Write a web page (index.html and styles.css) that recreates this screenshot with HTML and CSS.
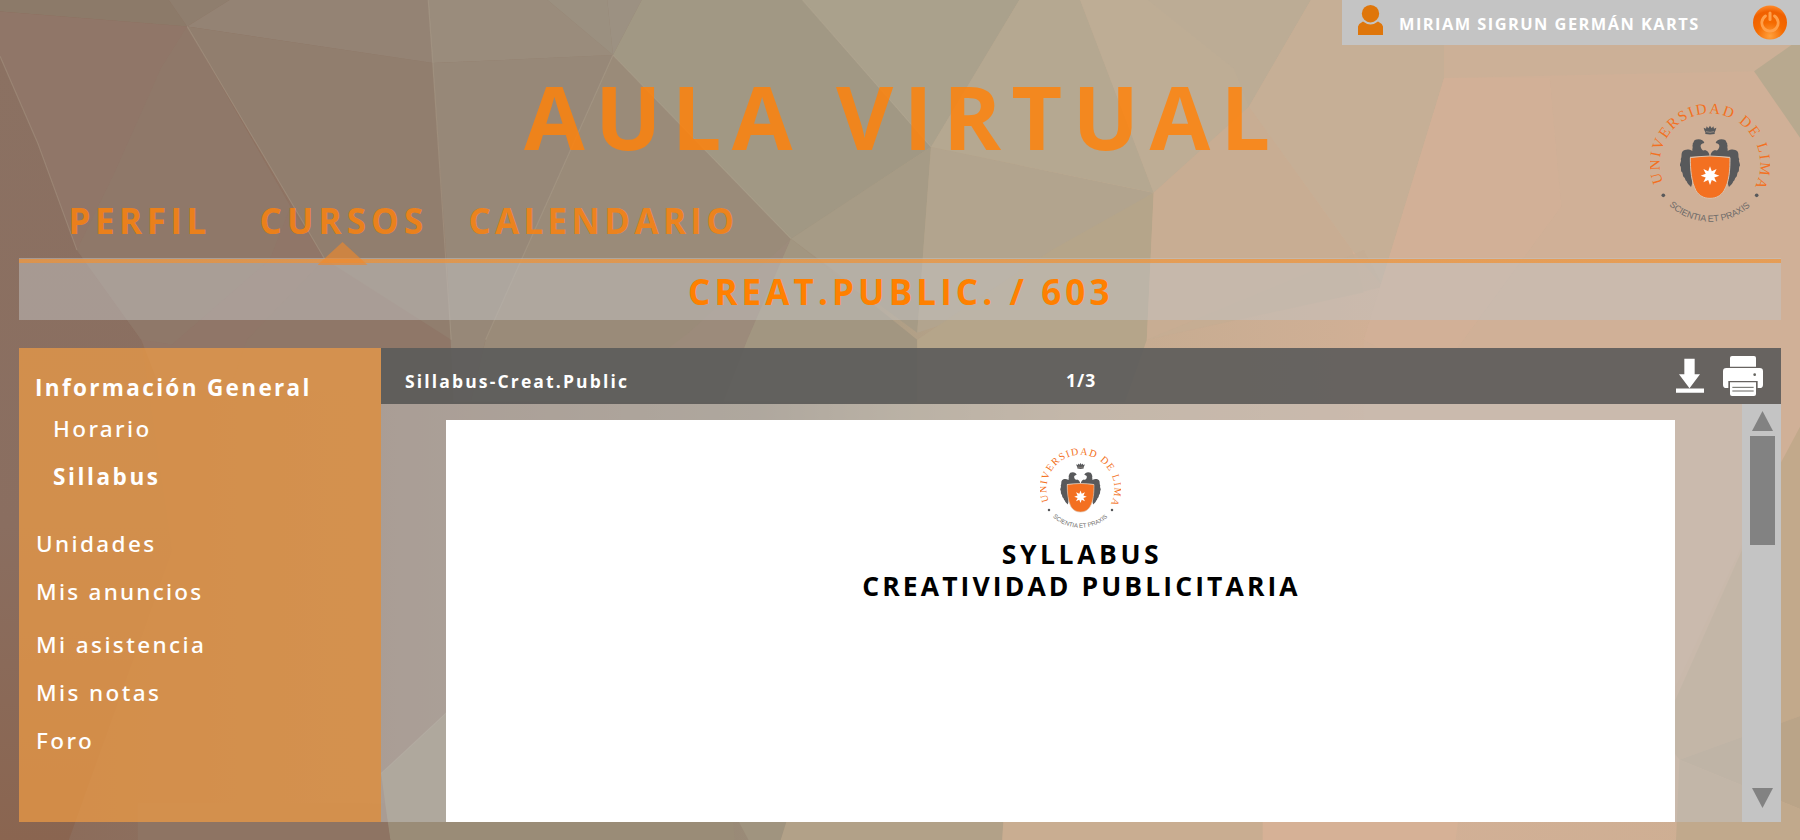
FILE: index.html
```
<!DOCTYPE html>
<html lang="es">
<head>
<meta charset="utf-8">
<title>Aula Virtual</title>
<link rel="stylesheet" href="styles.css">
</head>
<body>
<svg class="backdrop" viewBox="0 0 1568 732" preserveAspectRatio="none" aria-hidden="true">
  <defs>
    <linearGradient id="base" x1="0" x2="1" y1="0" y2="0">
      <stop offset="0" stop-color="#8b6a58"/>
      <stop offset=".2" stop-color="#8f7666"/>
      <stop offset=".42" stop-color="#9a8b78"/>
      <stop offset=".5" stop-color="#b09f86"/>
      <stop offset=".6" stop-color="#c4ab90"/>
      <stop offset=".78" stop-color="#d2b096"/>
      <stop offset="1" stop-color="#cdae92"/>
    </linearGradient>
    <linearGradient id="left" x1="0" x2="0" y1="0" y2="1">
      <stop offset="0" stop-color="#8b7162"/>
      <stop offset=".6" stop-color="#8a6e60"/>
      <stop offset="1" stop-color="#8a6550"/>
    </linearGradient>
  </defs>
  <rect width="1568" height="732" fill="url(#base)"/>
  <path fill="url(#left)" d="M0 49 33 125 67 218 123 296 150 480 60 732H0Z"/>
  <path fill="#8c7a69" d="M0 0H147L163 23 0 10Z"/>
  <path fill="#907668" d="M0 10 163 23 253 180 283 226 347 296 330 340H140L123 296 67 218 33 125 0 49Z"/>
  <path fill="#8f796a" d="M163 23 253 180 235 226 150 300 123 296 67 218 100 150 140 60Z" opacity=".7"/>
  <path fill="#8f7e6e" d="M147 0H200L163 23Z"/>
  <path fill="#948374" d="M200 0H373L377 55 163 23Z"/>
  <path fill="#917e6e" d="M163 23 377 55 393 296H347L283 226Z"/>
  <path fill="#8f7768" d="M283 226 393 296 400 340H200L215 296Z"/>
  <path fill="#9a8c7c" d="M373 0H477L534 48 377 55Z"/>
  <path fill="#9b9080" d="M477 0H529L534 48Z"/>
  <path fill="#9c9182" d="M529 0H559L534 48Z"/>
  <path fill="#978878" d="M377 55 534 48 423 296 410 350 395 350 390 240Z"/>
  <path fill="#9a8b79" d="M534 48 689 208 651 296 630 350H410L423 296Z"/>
  <path fill="#9c8b7b" d="M689 208 651 296 630 350H520L600 290Z"/>
  <path fill="#a19884" d="M559 0H699L811 128 689 208 534 48Z"/>
  <path fill="#aaa18c" d="M699 0H888L811 128Z"/>
  <path fill="#a69b86" d="M811 128 689 208 799 290Z"/>
  <path fill="#a29681" d="M689 208 799 296V350H630L651 296Z"/>
  <path fill="#b2a48e" d="M811 128 1005 168 830 280 799 290Z"/>
  <path fill="#b5a891" d="M888 0H941L1005 168 811 128Z"/>
  <path fill="#bcac95" d="M941 0H1142L1088 93 1005 168Z"/>
  <path fill="#c0ae96" d="M941 0H1000L1075 60 1088 93 1005 168Z" opacity=".5"/>
  <path fill="#b5a58a" d="M1005 168 999 296 980 350H799V296L916 218Z"/>
  <path fill="#c8ad93" d="M1005 168 1088 93 1178 218 1188 255 999 296Z"/>
  <path fill="#c6af96" d="M1142 0H1258V68L1205 250 1178 218 1088 93Z"/>
  <path fill="#ccb097" d="M1258 0H1568V70H1258Z"/>
  <path fill="#c5ad93" d="M1188 218 1205 250 999 296Z" opacity=".7"/>
  <path fill="#d0b097" d="M1258 68 1528 62 1568 110V372L1551 404 1440 640 1190 640 1188 296Z"/>
  <path fill="#d4b097" d="M1258 68 1188 296 1250 330 1360 180 1350 68Z" opacity=".55"/>
  <path fill="#b8a98f" d="M1528 62 1568 34V120Z"/>
  <path fill="#c2a98b" d="M1568 372 1551 404 1446 640 1463 662 1568 624Z"/>
  <path fill="#baa488" d="M1463 662 1568 624V705Z"/>
  <path fill="#c1a98c" d="M1463 662 1568 705V732H1460Z"/>
  <path fill="#9a8c77" d="M389 621 332 674 340 732H640L630 600Z"/>
  <path fill="#8e7463" d="M120 700H335L340 732H120Z"/>
  <path fill="#a0947f" d="M635 700H690L680 732H652Z"/>
  <path fill="#b2a188" d="M690 700H875L873 732H680Z"/>
  <path fill="#c9ad91" d="M875 700H1100V732H873Z"/>
  <path fill="#d6b196" d="M1100 700H1272L1268 732H1100Z"/>
  <g fill="none" stroke="#b9ae9a" stroke-opacity=".3">
    <path d="M534 48 689 208M699 0 811 128M163 23 283 226M0 49 33 125 67 218M389 621 332 674M373 0 377 55 393 296M534 48 423 296"/>
  </g>
</svg>

<svg class="defs" aria-hidden="true">
  <defs>
    <path id="arc-top" d="M99.500 277A151 151 0 1 1 380.500 277"/>
    <path id="arc-bottom" d="M117 346A179 179 0 0 0 363 346"/>
    <path id="eagle" d="M239 198C237 187 232 182 225 180C219 184 213 177 212 170C211 164 215 161 223 159C221 152 214 148 206 148C196 148 191 152 191 157C186 160 190 164 187 168C190 171 186 176 187 183C176 176 164 178 158 184C152 192 157 200 152 208C156 212 149 220 150 227C155 230 151 240 155 246C160 248 157 258 162 262C166 264 165 272 170 274C172 282 179 286 183 291C187 284 187 276 186 268L180 200Z"/>
    <symbol id="crest" viewBox="60 36 360 360">
      <text class="motto-top"><textPath href="#arc-top" textLength="602" lengthAdjust="spacing">UNIVERSIDAD DE LIMA</textPath></text>
      <text class="motto-bottom"><textPath href="#arc-bottom" textLength="268" lengthAdjust="spacing">SCIENTIA ET PRAXIS</textPath></text>
      <g fill="#58595b">
        <circle cx="100" cy="316" r="5.500"/><circle cx="380" cy="316" r="5.500"/>
        <path d="M226 126C223 121 222 117 221 113L228 116 230 109 235 115 240 107 245 115 250 109 252 116 259 113C258 117 257 121 254 126V132C245 134 235 134 226 132Z"/>
        <use href="#eagle"/><use href="#eagle" transform="matrix(-1 0 0 1 480 0)"/>
      </g>
      <path d="M228 125Q240 129 252 125" fill="none" stroke="#b9a594" stroke-width="2"/>
      <path d="M181 203Q210 199 240 198Q270 199 300 203C300 240 298 275 282 302C272 318 258 325 240 325C222 325 208 318 198 302C184 275 181 240 181 203Z" fill="#f37021" stroke="#d9c3b0" stroke-width="3"/>
      <path d="M240 229 245.400 244 259.800 237.200 252.900 251.600 268 257 252.900 262.400 259.800 276.800 245.400 269.900 240 285 234.600 269.900 220.200 276.800 227.100 262.400 212 257 227.100 251.600 220.200 237.200 234.600 244Z" fill="#fff"/>
    </symbol>
    <radialGradient id="glow" cx=".5" cy=".9" r=".9">
      <stop offset="0" stop-color="#ffa03c"/><stop offset=".45" stop-color="#f56a00"/><stop offset=".8" stop-color="#f06000"/><stop offset="1" stop-color="#ff8a2a"/>
    </radialGradient>
  </defs>
</svg>

<header class="top">
  <div class="user">
    <svg class="user-icon" viewBox="0 0 25 30"><circle cx="12.500" cy="8.700" r="8.700" fill="#df760b"/><path d="M0 30V21.500Q1.500 18 5 16.500Q12.500 22.500 20 16.500Q23.500 18 25 21.500V30Z" fill="#df760b"/></svg>
    <span class="user-name">MIRIAM SIGRUN GERMÁN KARTS</span>
    <svg class="power" viewBox="0 0 34 34"><circle cx="17" cy="17" r="17" fill="url(#glow)"/><path d="M12.500 10.500A8.200 8.200 0 1 0 21.500 10.500" fill="none" stroke="#ffa04a" stroke-width="2.800" stroke-linecap="round"/><path d="M17 7.500V14" stroke="#ffa04a" stroke-width="3" stroke-linecap="round"/></svg>
  </div>
  <h1 class="title">AULA VIRTUAL</h1>
  <svg class="seal"><use href="#crest"/></svg>
  <nav class="tabs">
    <a class="tab perfil">PERFIL</a>
    <a class="tab cursos">CURSOS<i class="marker"></i></a>
    <a class="tab calendario">CALENDARIO</a>
  </nav>
</header>

<section class="course">CREAT.PUBLIC. / 603</section>

<main class="panel">
  <aside class="menu">
    <a class="bold info">Información General</a>
    <a class="sub horario">Horario</a>
    <a class="sub bold">Sillabus</a>
    <a class="unidades">Unidades</a>
    <a class="anuncios">Mis anuncios</a>
    <a class="asistencia">Mi asistencia</a>
    <a>Mis notas</a>
    <a>Foro</a>
  </aside>
  <section class="viewer">
    <div class="toolbar">
      <span class="file">Sillabus-Creat.Public</span>
      <span class="pages">1/3</span>
      <svg class="download" viewBox="108 38 84 104"><path fill="#fff" d="M133 40H164V86H180L148.500 128 117 86H133ZM108 129H192V142H108Z"/></svg>
      <svg class="print" viewBox="249 33 120 120"><g fill="#fff"><path d="M270 65V39Q270 33 276 33H342Q348 33 348 39V65Z"/><path d="M259 69H359Q369 69 369 79V119Q369 129 359 129H353V108H265V129H259Q249 129 249 119V79Q249 69 259 69Z"/><path d="M270 112H348V147Q348 153 342 153H276Q270 153 270 147Z"/></g><path d="M277 127H341M277 138H341" stroke="#666560" stroke-width="3"/><circle cx="344" cy="89" r="4" fill="#666560"/></svg>
    </div>
    <div class="content">
      <article class="page">
        <svg class="page-seal"><use href="#crest"/></svg>
        <h2 class="doc-title">SYLLABUS</h2>
        <h2 class="doc-name">CREATIVIDAD PUBLICITARIA</h2>
      </article>
      <div class="scrollbar">
        <i class="up"></i>
        <i class="thumb"></i>
        <i class="down"></i>
      </div>
    </div>
  </section>
</main>
</body>
</html>
```
FILE: styles.css
```
* { box-sizing: border-box; }
body {
  margin: 0;
  width: 1800px;
  height: 840px;
  overflow: hidden;
  font-family: "Open Sans", "Noto Sans", sans-serif;
}
svg { display: block; flex: none; }
h1, h2 { margin: 0; font-weight: 700; }
.backdrop { position: absolute; inset: 0; width: 1800px; height: 840px; z-index: -1; }
.defs { position: absolute; width: 0; height: 0; }

.motto-top { font: 45px "Liberation Serif", serif; fill: #f37021; }
.motto-bottom { font: 27px "Liberation Sans", sans-serif; fill: #6d6a68; }

.top {
  display: grid;
  grid-template-columns: 1fr 150px;
  grid-template-rows: 45px 155px 58px;
  height: 258px;
}
.user {
  grid-column: 1 / 3;
  justify-self: end;
  display: flex;
  align-items: flex-start;
  width: 458px;
  height: 45px;
  padding: 5px 13px 0 16px;
  background: #c4c4c4;
}
.user-icon { width: 25px; height: 30px; }
.user-name {
  flex: 1;
  margin-left: 16px;
  font-size: 16.4px;
  font-weight: 700;
  line-height: 38px;
  letter-spacing: 1.45px;
  color: #fff;
  white-space: nowrap;
}
.power { width: 34px; height: 35px; }
.title {
  grid-row: 2;
  grid-column: 1 / 3;
  padding: 21px 0 0 524px;
  font-size: 88px;
  line-height: 100px;
  letter-spacing: 10.3px;
  color: rgba(255, 130, 10, .84);
}
.seal {
  grid-row: 2 / 4;
  grid-column: 2;
  width: 120px;
  height: 120px;
  margin-top: 57px;
}
.tabs { grid-row: 3; grid-column: 1; display: flex; padding-left: 68.5px; }
.tab {
  position: relative;
  font-size: 35px;
  font-weight: 700;
  line-height: 42px;
  color: rgba(255, 130, 10, .84);
}
.perfil { width: 191px; letter-spacing: 4.5px; }
.cursos { width: 209px; letter-spacing: 5.1px; }
.calendario { letter-spacing: 4.3px; }
.marker {
  position: absolute;
  left: 58px;
  top: 42px;
  width: 50px;
  height: 23px;
  background: rgba(241, 135, 40, .62);
  clip-path: polygon(50% 0, 100% 100%, 0 100%);
}

.course {
  height: 62px;
  margin: 0 19px;
  padding: 6px 0 0 669px;
  background: linear-gradient(transparent 1px, rgba(241, 145, 50, .7) 1.5px, rgba(241, 145, 50, .7) 5px, transparent 5px), rgba(196, 196, 196, .5);
  font-size: 35px;
  font-weight: 700;
  line-height: 55px;
  letter-spacing: 4.1px;
  color: #ff8000;
}

.panel { display: flex; height: 474px; margin: 28px 19px 0; }
.menu {
  display: flex;
  flex-direction: column;
  width: 362px;
  padding: 20px 0 0 17px;
  background: rgba(241, 157, 69, .7);
  font-family: "Noto Sans", "Open Sans", sans-serif;
  font-size: 22.5px;
  font-weight: 500;
  line-height: 40px;
  letter-spacing: 2.4px;
  color: #fff;
}
.menu a { margin-top: 8px; }
.menu a:first-child { margin-top: 0; }
.menu .bold { font-family: "Open Sans", sans-serif; font-weight: 700; letter-spacing: 2.6px; }
.menu .info { margin-left: -1px; letter-spacing: 2.35px; }
.menu .sub { padding-left: 17px; }
.menu .horario { margin-top: 1px; }
.menu .unidades { margin-top: 27px; }
.menu .anuncios { letter-spacing: 2.25px; }
.menu .asistencia { margin-top: 13px; }

.viewer { flex: 1; display: flex; flex-direction: column; }
.toolbar {
  display: flex;
  height: 56px;
  padding: 0 18px 0 24px;
  background: rgba(91, 91, 90, .9);
  font-size: 17.5px;
  font-weight: 700;
  color: #fff;
}
.file { width: 661px; line-height: 67px; letter-spacing: 2.15px; }
.pages { flex: 1; line-height: 64px; letter-spacing: 1px; }
.download { width: 28px; height: 35px; margin-top: 10px; }
.print { width: 40px; height: 40px; margin: 8px 0 0 19px; }
.content { flex: 1; display: flex; background: rgba(196, 196, 196, .5); }
.page {
  display: flex;
  flex-direction: column;
  align-items: center;
  width: 1229px;
  margin: 16px 67px 0 65px;
  padding: 27px 0 0 40px;
  background: #fff;
  font-size: 26.5px;
  line-height: 32px;
}
.page h2 { font-size: inherit; color: #000; }
.page-seal { width: 81px; height: 81px; margin-bottom: 10px; }
.doc-title { letter-spacing: 3.6px; margin-right: -3px; }
.doc-name { letter-spacing: 3.1px; margin-right: -2px; }
.scrollbar {
  display: flex;
  flex-direction: column;
  align-items: center;
  width: 39px;
  padding: 7px 0 14px 2px;
  background: #c4c4c4;
}
.up, .down { width: 21px; height: 20px; background: #828282; }
.up { clip-path: polygon(50% 0, 100% 100%, 0 100%); }
.down { margin-top: auto; clip-path: polygon(0 0, 100% 0, 50% 100%); }
.thumb { width: 25px; height: 109px; margin-top: 5px; background: #828282; }
```
